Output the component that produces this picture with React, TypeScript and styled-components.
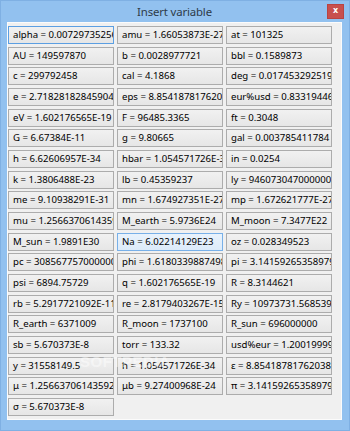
import React from "react";
import styled, { createGlobalStyle } from "styled-components";

const Global = createGlobalStyle`
  html, body { margin: 0; padding: 0; width: 350px; height: 431px; overflow: hidden; }
  body { font-family: "Noto Sans", "Open Sans", sans-serif; }
`;

const Window = styled.div`
  box-sizing: border-box;
  width: 350px;
  height: 431px;
  background: #92c1ef;
  border: 1px solid #7fb0e3;
  padding: 0 7px 10px 6px;
  display: flex;
  flex-direction: column;
`;

const TitleBar = styled.div`
  height: 21px;
  display: grid;
  grid-template-columns: 1fr auto 1fr;
  align-items: start;
`;

const Title = styled.div`
  grid-column: 2;
  padding-top: 4px;
  font-family: "Noto Sans", "Open Sans", sans-serif;
  font-size: 11.4px;
  line-height: 14px;
  color: #2e3b48;
  letter-spacing: -0.15px;
`;

const CloseButton = styled.div`
  grid-column: 3;
  justify-self: end;
  margin-top: 3px;
  margin-right: -2px;
  width: 17px;
  height: 15px;
  box-sizing: border-box;
  background: #c8504e;
  border: 1px solid #b94442;
  display: flex;
  align-items: center;
  justify-content: center;
  color: #fff;
  font-family: "DejaVu Sans", sans-serif;
  font-weight: bold;
  font-size: 8px;
  line-height: 8px;
  padding-bottom: 1px;
`;

const Client = styled.div`
  position: relative;
  flex: 1;
  box-sizing: border-box;
  background: #f0f0f0;
  border: 1px solid #fbfbfb;
  padding: 3px 0 0 0;
`;

const Grid = styled.div`
  display: grid;
  grid-template-columns: repeat(3, 106px);
  column-gap: 3px;
  grid-auto-rows: 18px;
  row-gap: 2.67px;
`;

type State = "normal" | "focus" | "hover";

const VarButton = styled.button<{ $state: State }>`
  box-sizing: border-box;
  display: block;
  width: 106px;
  height: 18px;
  margin: 0;
  padding: 0 4px;
  overflow: hidden;
  white-space: nowrap;
  text-align: left;
  font-family: "Noto Sans", "Open Sans", sans-serif;
  font-size: 9.6px;
  line-height: 16px;
  color: #000;
  border-radius: 0;
  border: 1px solid
    ${(p) => (p.$state === "focus" ? "#5c9fe2" : p.$state === "hover" ? "#78b0e8" : "#acacac")};
  background: ${(p) =>
    p.$state === "hover"
      ? "linear-gradient(#e9f3fc, #dcebfa)"
      : "linear-gradient(#f1f1f1, #e6e6e6)"};
`;

const Watermark = styled.span`
  position: absolute;
  left: 72px;
  top: 330px;
  font-family: "Liberation Sans", sans-serif;
  font-weight: bold;
  font-size: 15px;
  letter-spacing: 0.5px;
  color: rgba(255, 255, 255, 0.45);
  pointer-events: none;
`;

const vars: string[] = [
  "alpha = 0.0072973525698",
  "amu = 1.66053873E-27",
  "at = 101325",
  "AU = 149597870",
  "b = 0.0028977721",
  "bbl = 0.1589873",
  "c = 299792458",
  "cal = 4.1868",
  "deg = 0.0174532925199433",
  "e = 2.71828182845904523",
  "eps = 8.854187817620E-12",
  "eur%usd = 0.833194467",
  "eV = 1.602176565E-19",
  "F = 96485.3365",
  "ft = 0.3048",
  "G = 6.67384E-11",
  "g = 9.80665",
  "gal = 0.003785411784",
  "h = 6.62606957E-34",
  "hbar = 1.054571726E-34",
  "in = 0.0254",
  "k = 1.3806488E-23",
  "lb = 0.45359237",
  "ly = 9460730470000000",
  "me = 9.10938291E-31",
  "mn = 1.674927351E-27",
  "mp = 1.672621777E-27",
  "mu = 1.25663706143592E-6",
  "M_earth = 5.9736E24",
  "M_moon = 7.3477E22",
  "M_sun = 1.9891E30",
  "Na = 6.02214129E23",
  "oz = 0.028349523",
  "pc = 30856775700000000",
  "phi = 1.61803398874989",
  "pi = 3.14159265358979",
  "psi = 6894.75729",
  "q = 1.602176565E-19",
  "R = 8.3144621",
  "rb = 5.2917721092E-11",
  "re = 2.8179403267E-15",
  "Ry = 10973731.568539",
  "R_earth = 6371009",
  "R_moon = 1737100",
  "R_sun = 696000000",
  "sb = 5.670373E-8",
  "torr = 133.32",
  "usd%eur = 1.20019999",
  "y = 31558149.5",
  "ħ = 1.054571726E-34",
  "ε = 8.85418781762038E-12",
  "μ = 1.25663706143592E-6",
  "μb = 9.27400968E-24",
  "π = 3.14159265358979",
  "σ = 5.670373E-8",
];

const stateOf = (i: number): State => (i === 0 ? "focus" : i === 31 ? "hover" : "normal");

export default function App() {
  return (
    <>
      <Global />
      <Window>
        <TitleBar>
          <Title>Insert variable</Title>
          <CloseButton>x</CloseButton>
        </TitleBar>
        <Client>
          <Grid>
            {vars.map((v, i) => (
              <VarButton key={v} $state={stateOf(i)}>
                {v}
              </VarButton>
            ))}
          </Grid>
          <Watermark>SOFTPEDIA</Watermark>
        </Client>
      </Window>
    </>
  );
}
